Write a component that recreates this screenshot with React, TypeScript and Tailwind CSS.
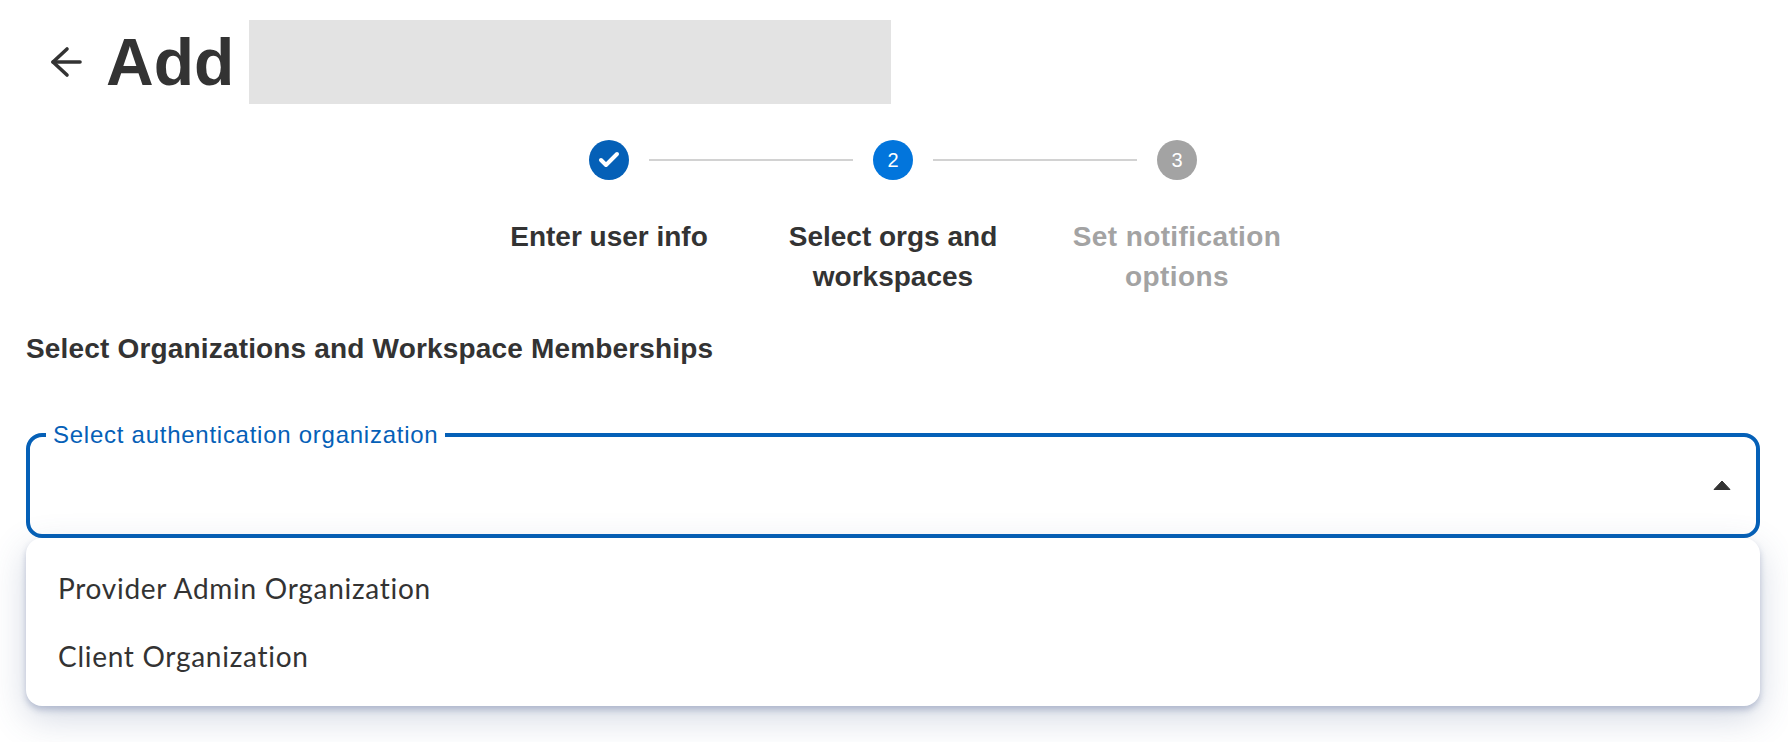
import { Check } from 'lucide-react';

const steps = [
  { label: 'Enter user info', tone: 'text-[#333333]' },
  { label: 'Select orgs and workspaces', tone: 'text-[#333333]' },
  { label: 'Set notification options', tone: 'text-[#a3a3a3] tracking-[0.4px]' },
];

const options = ['Provider Admin Organization', 'Client Organization'];

export default function App() {
  return (
    <div className="h-[742px] w-full overflow-hidden bg-white font-['Liberation_Sans',sans-serif] text-[#333333]">
      <header className="flex h-[104px] items-end pl-[50px]">
        <button className="mb-[26px] text-[#333333]">
          <svg className="block" width="33" height="32" viewBox="0 0 33 32" fill="none" stroke="currentColor" strokeWidth="3.6" strokeLinecap="round" strokeLinejoin="round">
            <path d="M17 3 L3 16 L17 29" />
            <path d="M3 16 H30" />
          </svg>
        </button>
        <div className="flex h-[84px] items-center">
          <h1 className="ml-[23px] text-[66px] leading-[84px] font-bold">Add</h1>
          <div className="ml-[15px] h-[84px] w-[642px] bg-[#e3e3e3]" />
        </div>
      </header>

      <div className="mt-9 flex items-center justify-center gap-5 pr-[2px]">
        <span className="flex h-10 w-10 items-center justify-center rounded-full bg-[#0560b7] text-white">
          <Check size={24} strokeWidth={4} />
        </span>
        <span className="h-0.5 w-[204px] bg-[#d2d2d2]" />
        <span className="flex h-10 w-10 items-center justify-center rounded-full bg-[#0275dc] text-xl text-white">2</span>
        <span className="h-0.5 w-[204px] bg-[#d2d2d2]" />
        <span className="flex h-10 w-10 items-center justify-center rounded-full bg-[#a3a3a3] text-xl text-white">3</span>
      </div>

      <div className="mt-[37px] flex justify-center gap-[60px] pr-[2px]">
        {steps.map((step) => (
          <div key={step.label} className={`w-[224px] text-center text-[28px] leading-10 font-bold ${step.tone}`}>
            {step.label}
          </div>
        ))}
      </div>

      <div className="px-[26px] pr-[28px]">
        <h2 className="mt-8 text-[28px] leading-10 font-bold tracking-[0.17px]">Select Organizations and Workspace Memberships</h2>

        <div className="relative mt-[50px]">
          <fieldset className="relative h-[119px] rounded-2xl border-4 border-[#0560b7]">
            <legend className="ml-4 px-[7px] text-2xl leading-8 tracking-[0.74px] text-[#0560b7]">Select authentication organization</legend>
            <svg className="absolute top-[29px] right-[25px]" width="18" height="10" viewBox="0 0 18 10">
              <path d="M9 1 L17 9.5 L1 9.5 Z" fill="#333333" stroke="#333333" strokeLinejoin="round" />
            </svg>
          </fieldset>

          <ul className="absolute top-full right-0 left-0 h-[168px] rounded-2xl bg-white py-[16px] pl-8 font-['Lato',sans-serif] text-[28px] leading-[68px] tracking-[0.72px] text-[#333333] shadow-[0_4px_6px_rgba(70,90,140,0.3),0_12px_36px_rgba(70,90,140,0.24)]">
            {options.map((option) => (
              <li key={option}>{option}</li>
            ))}
          </ul>
        </div>
      </div>
    </div>
  );
}
